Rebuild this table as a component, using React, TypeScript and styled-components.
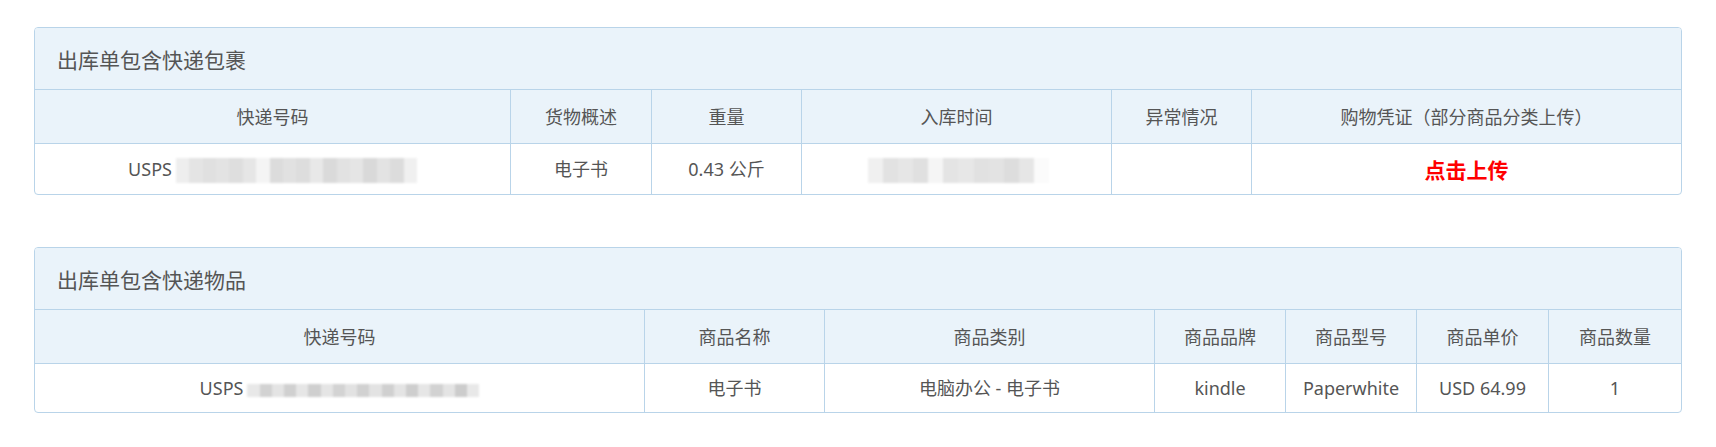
import React from "react";
import styled, { createGlobalStyle } from "styled-components";

const GlobalStyle = createGlobalStyle`
  html, body { margin: 0; padding: 0; background: #ffffff; }
  body {
    font-family: "Noto Sans", "Noto Sans CJK SC", sans-serif;
    color: #555555;
  }
`;

const Page = styled.div`
  padding: 27px 34px 0;
`;

const Panel = styled.section`
  border: 1px solid #b9d4e9;
  border-radius: 4px;
  overflow: hidden;
  & + & {
    margin-top: 52px;
  }
`;

const PanelTitle = styled.div`
  height: 61px;
  display: flex;
  align-items: center;
  padding-left: 22px;
  background: #eaf3fa;
  border-bottom: 1px solid #b9d4e9;
  font-size: 21px;
  color: #555555;
`;

const Table = styled.table`
  width: 100%;
  table-layout: fixed;
  border-collapse: separate;
  border-spacing: 0;
`;

const Col = styled.col<{ $w: number }>`
  width: ${(p) => p.$w}px;
`;

const Th = styled.th`
  background: #eaf3fa;
  font-weight: normal;
  font-size: 18px;
  line-height: 24px;
  padding: 15px 4px 14px;
  color: #555555;
  text-align: center;
  border-bottom: 1px solid #b9d4e9;
  border-right: 1px solid #b9d4e9;
  &:last-child {
    border-right: none;
  }
`;

const Td = styled.td<{ $tall?: boolean }>`
  font-size: 18px;
  line-height: 22px;
  height: ${(p) => (p.$tall ? 24 : 22)}px;
  padding: 13px 4px;
  color: #555555;
  text-align: center;
  white-space: nowrap;
  border-right: 1px solid #b9d4e9;
  &:last-child {
    border-right: none;
  }
`;

const UploadLink = styled.a`
  display: inline-block;
  vertical-align: middle;
  line-height: 22px;
  color: #ff0000;
  font-weight: bold;
  font-size: 21px;
  text-decoration: none;
  cursor: pointer;
`;

const Redacted = styled.span<{ $w: number; $h: number }>`
  display: inline-flex;
  vertical-align: middle;
  width: ${(p) => p.$w}px;
  height: ${(p) => p.$h}px;
  margin: ${(p) => (p.$h > 20 ? "-3px 0 -3px 4px" : "0 0 0 4px")};
  filter: blur(1px);
  overflow: hidden;
`;

const Cell = styled.span<{ $c: string }>`
  flex: 1 1 0;
  height: 100%;
  background: ${(p) => p.$c};
`;

const softShades = [
  "#eeeeee", "#e4e4e4", "#e0e0e0", "#e3e3e3", "#dedede", "#e6e6e6", "#f4f4f4",
  "#dcdcdc", "#e1e1e1", "#dddddd", "#e8e8e8", "#dadada", "#e2e2e2", "#e5e5e5",
  "#d9d9d9", "#e3e3e3", "#dcdcdc", "#f0f0f0",
];
const timeShades = [
  "#f0f0f0", "#e2e2e2", "#e6e6e6", "#e0e0e0", "#f5f5f5", "#e4e4e4", "#e7e7e7",
  "#e1e1e1", "#e3e3e3", "#dddddd", "#e6e6e6", "#fbfbfb",
];
const mosaicShades = [
  "#e8e8e8", "#d2d2d2", "#e4e4e4", "#d0d0d0", "#e6e6e6", "#cfcfcf", "#e5e5e5",
  "#d3d3d3", "#e2e2e2", "#d1d1d1", "#e3e3e3", "#d0d0d0", "#e4e4e4", "#cecece",
  "#e6e6e6", "#d2d2d2", "#e4e4e4", "#cccccc", "#e8e8e8",
];

function Blur({ w, h, shades }: { w: number; h: number; shades: string[] }) {
  return (
    <Redacted $w={w} $h={h} aria-label="已隐藏">
      {shades.map((c, i) => (
        <Cell key={i} $c={c} />
      ))}
    </Redacted>
  );
}

export default function App() {
  return (
    <>
      <GlobalStyle />
      <Page>
        <Panel>
          <PanelTitle>出库单包含快递包裹</PanelTitle>
          <Table>
            <colgroup>
              <Col $w={476} />
              <Col $w={141} />
              <Col $w={150} />
              <Col $w={310} />
              <Col $w={140} />
              <Col $w={429} />
            </colgroup>
            <thead>
              <tr>
                <Th>快递号码</Th>
                <Th>货物概述</Th>
                <Th>重量</Th>
                <Th>入库时间</Th>
                <Th>异常情况</Th>
                <Th>购物凭证（部分商品分类上传）</Th>
              </tr>
            </thead>
            <tbody>
              <tr>
                <Td $tall>
                  USPS
                  <Blur w={241} h={25} shades={softShades} />
                </Td>
                <Td $tall>电子书</Td>
                <Td $tall>0.43 公斤</Td>
                <Td $tall>
                  <Blur w={181} h={25} shades={timeShades} />
                </Td>
                <Td $tall></Td>
                <Td $tall>
                  <UploadLink>点击上传</UploadLink>
                </Td>
              </tr>
            </tbody>
          </Table>
        </Panel>

        <Panel>
          <PanelTitle>出库单包含快递物品</PanelTitle>
          <Table>
            <colgroup>
              <Col $w={610} />
              <Col $w={180} />
              <Col $w={330} />
              <Col $w={131} />
              <Col $w={131} />
              <Col $w={132} />
              <Col $w={132} />
            </colgroup>
            <thead>
              <tr>
                <Th>快递号码</Th>
                <Th>商品名称</Th>
                <Th>商品类别</Th>
                <Th>商品品牌</Th>
                <Th>商品型号</Th>
                <Th>商品单价</Th>
                <Th>商品数量</Th>
              </tr>
            </thead>
            <tbody>
              <tr>
                <Td>
                  USPS
                  <Blur w={232} h={13} shades={mosaicShades} />
                </Td>
                <Td>电子书</Td>
                <Td>电脑办公 - 电子书</Td>
                <Td>kindle</Td>
                <Td>Paperwhite</Td>
                <Td>USD 64.99</Td>
                <Td>1</Td>
              </tr>
            </tbody>
          </Table>
        </Panel>
      </Page>
    </>
  );
}
